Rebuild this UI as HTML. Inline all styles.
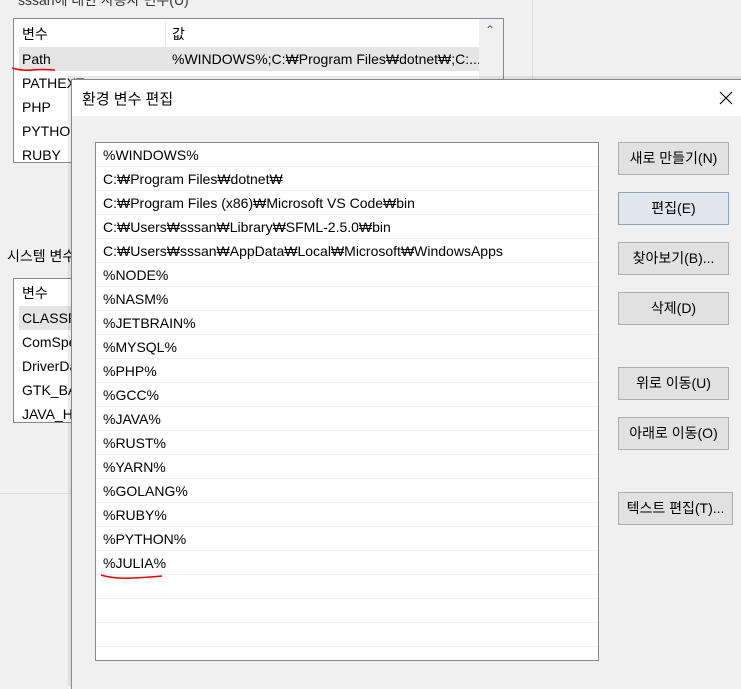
<!DOCTYPE html>
<html><head><meta charset="utf-8"><style>
*{margin:0;padding:0;box-sizing:border-box}
body{width:741px;height:676px;overflow:hidden;background:#f0f0f0;position:relative;font-family:"Liberation Sans","Noto Sans CJK KR",sans-serif;font-size:14px;color:#000}
.abs{position:absolute}
.lb{position:absolute;background:#fff;border:1px solid #828790}
.row{position:absolute;left:8px;height:24px;line-height:24px;white-space:nowrap}
.btn{position:absolute;left:618px;width:111px;height:33px;background:#e1e1e1;border:1px solid #adadad;text-align:center;line-height:31px;font-size:14px;white-space:nowrap}
.it{position:absolute;left:0;right:0;height:24px;border-bottom:1px solid #f0f0f0;padding-left:7px;line-height:24px;white-space:nowrap}
</style></head><body>
<div class="abs" style="left:18px;top:-10px;font-size:14px;color:#333">sssan에 대한 사용자 변수(U)</div>
<div class="abs" style="left:532px;top:0;width:1px;height:676px;background:#dcdcdc"></div>
<div class="lb" style="left:13px;top:18px;width:491px;height:145px;overflow:hidden">
 <div class="abs" style="left:0;top:0;width:465px;height:27px;background:#fff"></div>
 <div class="abs" style="left:151px;top:2px;width:1px;height:25px;background:#e5e5e5"></div>
 <div class="row" style="top:3px">변수</div>
 <div class="row" style="top:3px;left:158px">값</div>
 <div class="abs" style="left:5px;top:28px;width:460px;height:24px;background:#e5e5e5"></div>
 <div class="row" style="top:28px">Path</div>
 <div class="row" style="top:28px;left:158px">%WINDOWS%;C:₩Program Files₩dotnet₩;C:...</div>
 <div class="row" style="top:52px">PATHEXT</div>
 <div class="row" style="top:76px">PHP</div>
 <div class="row" style="top:100px">PYTHON</div>
 <div class="row" style="top:124px">RUBY</div>
 <div class="abs" style="left:465px;top:0;width:25px;height:145px;background:#f0f0f0"></div>
 <div class="abs" style="left:471px;top:4px;font-size:12px;color:#606060">&#8963;</div>
</div>
<svg class="abs" style="left:10px;top:64px" width="50" height="10"><path d="M2 4 Q12 7 22 6 T45 6" stroke="#e00" stroke-width="1.5" fill="none"/></svg>
<div class="abs" style="left:7px;top:246px">시스템 변수(S)</div>
<div class="lb" style="left:13px;top:278px;width:491px;height:145px;overflow:hidden">
 <div class="row" style="top:2px">변수</div>
 <div class="abs" style="left:5px;top:27px;width:460px;height:24px;background:#e5e5e5"></div>
 <div class="row" style="top:27px">CLASSPATH</div>
 <div class="row" style="top:51px">ComSpec</div>
 <div class="row" style="top:75px">DriverData</div>
 <div class="row" style="top:99px">GTK_BASEPATH</div>
 <div class="row" style="top:123px">JAVA_HOME</div>
</div>
<div class="abs" style="left:0;top:493px;width:532px;height:1px;background:#dcdcdc"></div>

<div class="abs" style="left:68px;top:76px;width:680px;height:610px;background:rgba(0,0,0,0.08)"></div>
<div class="abs" style="left:71px;top:79px;width:680px;height:610px;background:#f0f0f0;border-left:1px solid #888;border-top:1px solid #888">
 <div class="abs" style="left:0;top:0;width:680px;height:36px;background:#fff"></div>
 <div class="abs" style="left:10px;top:8px;font-size:15px">환경 변수 편집</div>
 <svg class="abs" style="left:646px;top:10px" width="16" height="16"><path d="M2 2L14 14M14 2L2 14" stroke="#000" stroke-width="1.2"/></svg>
</div>
<div class="lb" style="left:95px;top:142px;width:504px;height:519px;overflow:hidden">
 <div class="it" style="top:0">%WINDOWS%</div>
 <div class="it" style="top:24px">C:₩Program Files₩dotnet₩</div>
 <div class="it" style="top:48px">C:₩Program Files (x86)₩Microsoft VS Code₩bin</div>
 <div class="it" style="top:72px">C:₩Users₩sssan₩Library₩SFML-2.5.0₩bin</div>
 <div class="it" style="top:96px">C:₩Users₩sssan₩AppData₩Local₩Microsoft₩WindowsApps</div>
 <div class="it" style="top:120px">%NODE%</div>
 <div class="it" style="top:144px">%NASM%</div>
 <div class="it" style="top:168px">%JETBRAIN%</div>
 <div class="it" style="top:192px">%MYSQL%</div>
 <div class="it" style="top:216px">%PHP%</div>
 <div class="it" style="top:240px">%GCC%</div>
 <div class="it" style="top:264px">%JAVA%</div>
 <div class="it" style="top:288px">%RUST%</div>
 <div class="it" style="top:312px">%YARN%</div>
 <div class="it" style="top:336px">%GOLANG%</div>
 <div class="it" style="top:360px">%RUBY%</div>
 <div class="it" style="top:384px">%PYTHON%</div>
 <div class="it" style="top:408px">%JULIA%</div>
 <div class="it" style="top:432px"></div>
 <div class="it" style="top:456px"></div>
 <div class="it" style="top:480px"></div>
</div>
<svg class="abs" style="left:98px;top:572px" width="70" height="12"><path d="M3 3 Q15 7 35 6 T64 4" stroke="#e00" stroke-width="1.5" fill="none"/></svg>

<div class="btn" style="top:142px">새로 만들기(N)</div>
<div class="btn" style="top:192px;background:#e0e6ec;border-color:#8aa3bb">편집(E)</div>
<div class="btn" style="top:242px">찾아보기(B)...</div>
<div class="btn" style="top:292px">삭제(D)</div>
<div class="btn" style="top:367px">위로 이동(U)</div>
<div class="btn" style="top:417px">아래로 이동(O)</div>
<div class="btn" style="top:492px;width:115px">텍스트 편집(T)...</div>
</body></html>
